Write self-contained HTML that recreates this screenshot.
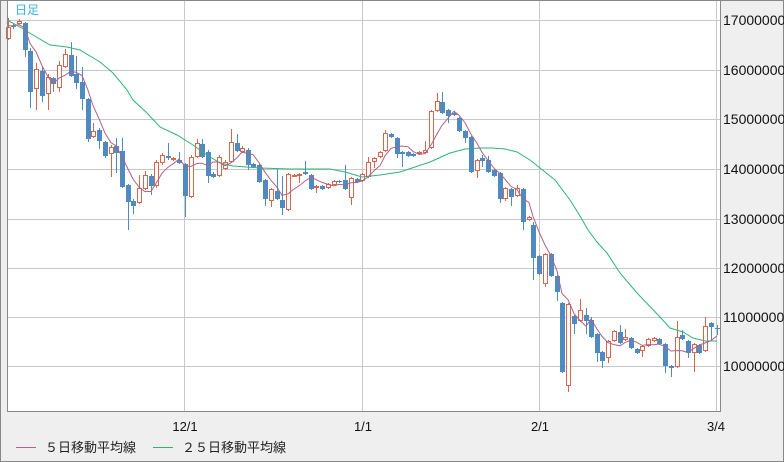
<!DOCTYPE html>
<html><head><meta charset="utf-8"><style>
html,body{margin:0;padding:0;background:#efefef;}
svg{display:block;}
</style></head><body>
<svg id="s" width="784" height="462" xmlns="http://www.w3.org/2000/svg" font-family="Liberation Sans, Noto Sans CJK JP, sans-serif">
<rect x="0" y="0" width="784" height="462" fill="#efefef"/>
<rect x="7" y="0" width="714" height="411" fill="#fff"/>
<g stroke="#c8c8c8" stroke-width="1">
<line x1="7" y1="20.5" x2="721" y2="20.5"/>
<line x1="7" y1="70.5" x2="721" y2="70.5"/>
<line x1="7" y1="119.5" x2="721" y2="119.5"/>
<line x1="7" y1="169.5" x2="721" y2="169.5"/>
<line x1="7" y1="219.5" x2="721" y2="219.5"/>
<line x1="7" y1="268.5" x2="721" y2="268.5"/>
<line x1="7" y1="317.5" x2="721" y2="317.5"/>
<line x1="7" y1="366.5" x2="721" y2="366.5"/>
<line x1="184.5" y1="0" x2="184.5" y2="411"/>
<line x1="362.5" y1="0" x2="362.5" y2="411"/>
<line x1="539.5" y1="0" x2="539.5" y2="411"/>
<line x1="716.5" y1="0" x2="716.5" y2="411"/>
</g>
<g id="c"></g>
<polyline fill="none" stroke="#2db37a" stroke-width="1" points="7,20 20,27 33,35 50,45 67,47 80,50 100,62 113,73 127,90 133,100 147,113 160,127 177,135 193,145 207,155 220,163 233,166 260,168 290,169 330,169 345,172 362,177 380,175 400,172 415,167 430,162 450,153 465,149 480,148 492,148 505,149 517,152 530,160 540,168 555,180 570,200 580,216 588,230 597,242 607,253 620,273 637,293 660,317 670,328 683,332 693,338 705,341 717,341"/>
<polyline id="ma5" fill="none" stroke="#b0608a" stroke-width="1"/>
<rect x="7.5" y="0.5" width="713" height="411" fill="none" stroke="#888" stroke-width="1"/>
<rect x="0.5" y="0.5" width="783" height="461" fill="none" stroke="#888" stroke-width="1"/>
<text x="15" y="14" font-size="12" fill="#3ab0e0">日足</text>
<g font-size="14" fill="#111">
<text x="723" y="25">17000000</text>
<text x="723" y="75">16000000</text>
<text x="723" y="124">15000000</text>
<text x="723" y="174">14000000</text>
<text x="723" y="224">13000000</text>
<text x="723" y="273">12000000</text>
<text x="723" y="322">11000000</text>
<text x="723" y="371">10000000</text>
</g>
<g font-size="13" fill="#111">
<text x="185" y="431" text-anchor="middle">12/1</text>
<text x="363" y="431" text-anchor="middle">1/1</text>
<text x="540" y="431" text-anchor="middle">2/1</text>
<text x="716" y="431" text-anchor="middle">3/4</text>
</g>
<line x1="16" y1="447.5" x2="36" y2="447.5" stroke="#c0608a"/>
<text x="45" y="452" font-size="13" fill="#222">５日移動平均線</text>
<line x1="153" y1="447.5" x2="173" y2="447.5" stroke="#2db37a"/>
<text x="182" y="452" font-size="13" fill="#222">２５日移動平均線</text>
</svg>
<script>
var d=[[8,1,27,39,18,40],[13,0,26,27,24,29],[19,1,21,24,19,25],[25,0,23,50,22,57],[30,0,51,92,48,108],[36,1,69,89,63,110],[42,0,71,96,67,102],[48,1,77,94,74,110],[53,0,78,84,77,92],[59,1,65,88,61,92],[65,1,54,67,49,68],[71,0,55,76,42,77],[76,0,74,83,56,89],[82,0,82,99,67,110],[88,0,99,139,98,142],[93,1,131,137,123,138],[99,0,130,141,128,149],[105,0,142,156,141,158],[111,1,147,154,145,177],[116,0,146,153,138,173],[122,0,151,187,138,188],[128,0,185,202,184,230],[133,0,201,206,199,214],[139,1,188,203,175,204],[145,1,175,189,171,190],[151,0,176,186,174,195],[156,1,162,186,160,188],[162,1,155,163,153,165],[168,0,156,158,143,160],[173,1,158,160,157,161],[179,0,160,163,152,164],[185,0,164,196,163,217],[191,1,157,197,155,198],[197,1,143,157,139,158],[202,0,144,157,139,158],[208,0,152,176,150,183],[213,0,174,177,172,178],[219,1,157,176,155,177],[225,1,162,169,160,170],[231,1,142,162,129,163],[237,0,143,151,134,152],[242,1,148,152,146,153],[248,0,150,165,148,170],
[253,0,164,167,163,168],[259,0,165,182,164,183],[265,0,180,199,179,206],[271,1,189,201,188,207],[277,0,191,199,169,200],[282,0,200,208,176,215],[288,1,174,210,173,211],[294,1,175,176,174,177],[299,1,174,176,173,183],[305,0,172,174,161,175],[311,0,175,189,174,190],[316,1,186,187,185,193],[322,0,186,189,185,190],[328,1,184,188,183,189],[334,1,181,185,180,186],[339,0,181,182,180,183],[345,0,180,189,165,190],[351,1,178,198,177,205],[357,0,179,182,178,183],[362,1,174,181,173,182],[368,1,162,177,157,178],[374,1,158,162,157,168],[380,1,152,157,151,158],[385,1,133,151,130,152],[391,0,134,137,133,138],[397,0,138,154,137,158],[402,0,152,154,151,167],[408,0,152,156,151,157],[413,0,154,156,153,157],[419,1,152,154,151,155],[425,1,150,153,141,154],[431,1,111,148,110,149],[437,1,101,111,93,112],[442,0,102,113,92,114],[448,0,110,116,109,123],[454,0,113,115,112,116],[459,0,118,131,117,132],[465,0,131,138,130,143],[471,0,137,172,136,173],[477,1,160,171,159,178],[482,0,158,161,155,167],[488,0,160,172,156,173],[494,0,170,176,169,177],[500,0,173,199,172,203],[505,1,188,199,187,201],[511,0,189,197,188,206],[517,1,188,196,185,197],[523,0,189,222,188,230],[529,1,217,220,216,221],
[533,0,225,258,222,280],[539,0,256,274,255,275],[545,1,254,284,253,287],[551,0,254,276,253,277],[557,0,276,292,275,301],[562,0,303,372,302,373],[568,1,304,386,303,392],[574,0,316,324,315,334],[580,1,310,321,299,322],[586,0,315,321,308,334],[591,0,320,337,317,338],[597,0,334,353,333,362],[602,0,352,361,351,368],[608,1,341,358,340,363],[614,1,331,341,330,342],[620,0,332,343,325,344],[625,1,337,340,329,341],[631,0,338,348,337,349],[637,0,349,353,348,354],[642,1,346,351,345,357],[648,1,339,346,338,347],[654,1,338,341,337,342],[659,0,339,344,338,345],[665,0,344,366,343,373],[671,0,366,368,365,377],[677,1,337,367,321,368],[682,0,335,339,330,340],[688,0,341,353,340,358],[694,1,344,353,343,372],[699,0,345,353,344,354],[705,1,326,351,317,352],[711,0,323,327,322,340],[717,0,328,329,325,335]];
var g=document.getElementById("c"),h="";
var closes=[];
d.forEach(function(e){var x=e[0],up=e[1],t=e[2],b=e[3],wt=e[4],wb=e[5];
var col=up?"#d8664b":"#4f8bc0";
h+='<line x1="'+(x+0.5)+'" y1="'+wt+'" x2="'+(x+0.5)+'" y2="'+wb+'" stroke="'+col+'"/>';
if(up){h+='<rect x="'+(x-1.5)+'" y="'+(t+0.5)+'" width="4" height="'+Math.max(1,b-t-1)+'" fill="#fff" stroke="'+col+'"/>';}
else{h+='<rect x="'+(x-2)+'" y="'+t+'" width="5" height="'+Math.max(1,b-t)+'" fill="'+col+'"/>';}
closes.push(up?t:b);});
g.innerHTML=h;
var pts=[];
for(var i=0;i<d.length;i++){var s=0,n=0;for(var j=Math.max(0,i-4);j<=i;j++){s+=closes[j];n++;}
var v=s/n; if(i<4){v=v*0.6+24*0.4;} pts.push(d[i][0]+","+v.toFixed(1));}
pts.unshift("7,22");
document.getElementById("ma5").setAttribute("points",pts.join(" "));
</script>
</body></html>
